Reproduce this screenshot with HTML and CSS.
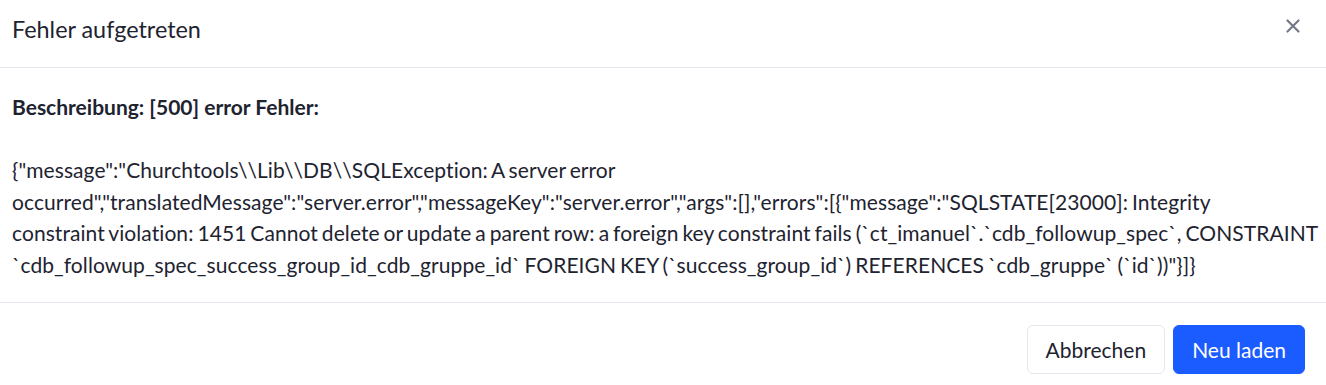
FILE: index.html
```html
<!DOCTYPE html>
<html lang="de">
<head>
    <meta charset="UTF-8">
    <meta name="viewport" content="width=device-width, initial-scale=1.0">
    <title>Fehler aufgetreten</title>
    <link rel="stylesheet" href="styles.css">
</head>
<body>
    <div class="modal">
        <div class="modal-header">
            <h2 class="modal-title">Fehler aufgetreten</h2>
            <button class="close" aria-label="Schließen">
                <svg width="14" height="14" viewBox="0 0 14 14">
                    <path d="M1.5 1.5 L12.5 12.5 M12.5 1.5 L1.5 12.5" stroke="currentColor" stroke-width="2.2" stroke-linecap="round"/>
                </svg>
            </button>
        </div>

        <div class="modal-body">
            <strong>Beschreibung: [500] error Fehler:</strong><br><br>
            <span class="error-json">{"message":"Churchtools\\Lib\\DB\\SQLException: A server error occurred","translatedMessage":"server.error","messageKey":"server.error","args":[],"errors":[{"message":"SQLSTATE[23000]: Integrity<br>constraint violation: 1451 Cannot delete or update a parent row: a foreign key constraint fails (`ct_imanuel`.`cdb_followup_spec`, CONSTRAINT `cdb_followup_spec_success_group_id_cdb_gruppe_id` FOREIGN KEY (`success_group_id`) REFERENCES `cdb_gruppe` (`id`))"}]}</span>
        </div>

        <div class="modal-footer">
            <button class="btn btn-light">Abbrechen</button>
            <button class="btn btn-primary">Neu laden</button>
        </div>
    </div>
</body>
</html>
```

FILE: styles.css
```css
body {
    margin: 0;
    font-family: Lato, "Liberation Sans", sans-serif;
    color: #1e2330;
    background: #fff;
}
.modal {
    width: 100%;
}
.modal-header {
    box-sizing: border-box;
    display: flex;
    align-items: flex-start;
    justify-content: space-between;
    height: 68px;
    padding: 15px 26px 0 12px;
    border-bottom: 1px solid #e3e7ee;
}
.modal-title {
    margin: 0;
    font-size: 23.4px;
    font-weight: 400;
}
.close {
    border: none;
    background: none;
    padding: 0;
    margin-top: 4px;
    color: #747985;
    cursor: pointer;
    display: flex;
}
.modal-body {
    padding: 23px 8px 22px 12px;
    font-size: 21px;
    line-height: 31.5px;
    border-bottom: 1px solid #e3e7ee;
}
.error-json {
    letter-spacing: 0.07px;
    word-spacing: -1.5px;
}
.modal-footer {
    display: flex;
    justify-content: flex-end;
    gap: 8px;
    padding: 22px 21px 11px;
}
.btn {
    font-family: inherit;
    font-size: 21px;
    height: 49px;
    padding: 0 18px;
    border-radius: 6px;
    cursor: pointer;
}
.btn-light {
    background: #fff;
    color: #1e2330;
    border: 1px solid #e3e7ee;
}
.btn-primary {
    background: #1a5cff;
    color: #fff;
    border: 1px solid #1a5cff;
}
.btn-primary:hover {
    background: #0f4be0;
}
```
